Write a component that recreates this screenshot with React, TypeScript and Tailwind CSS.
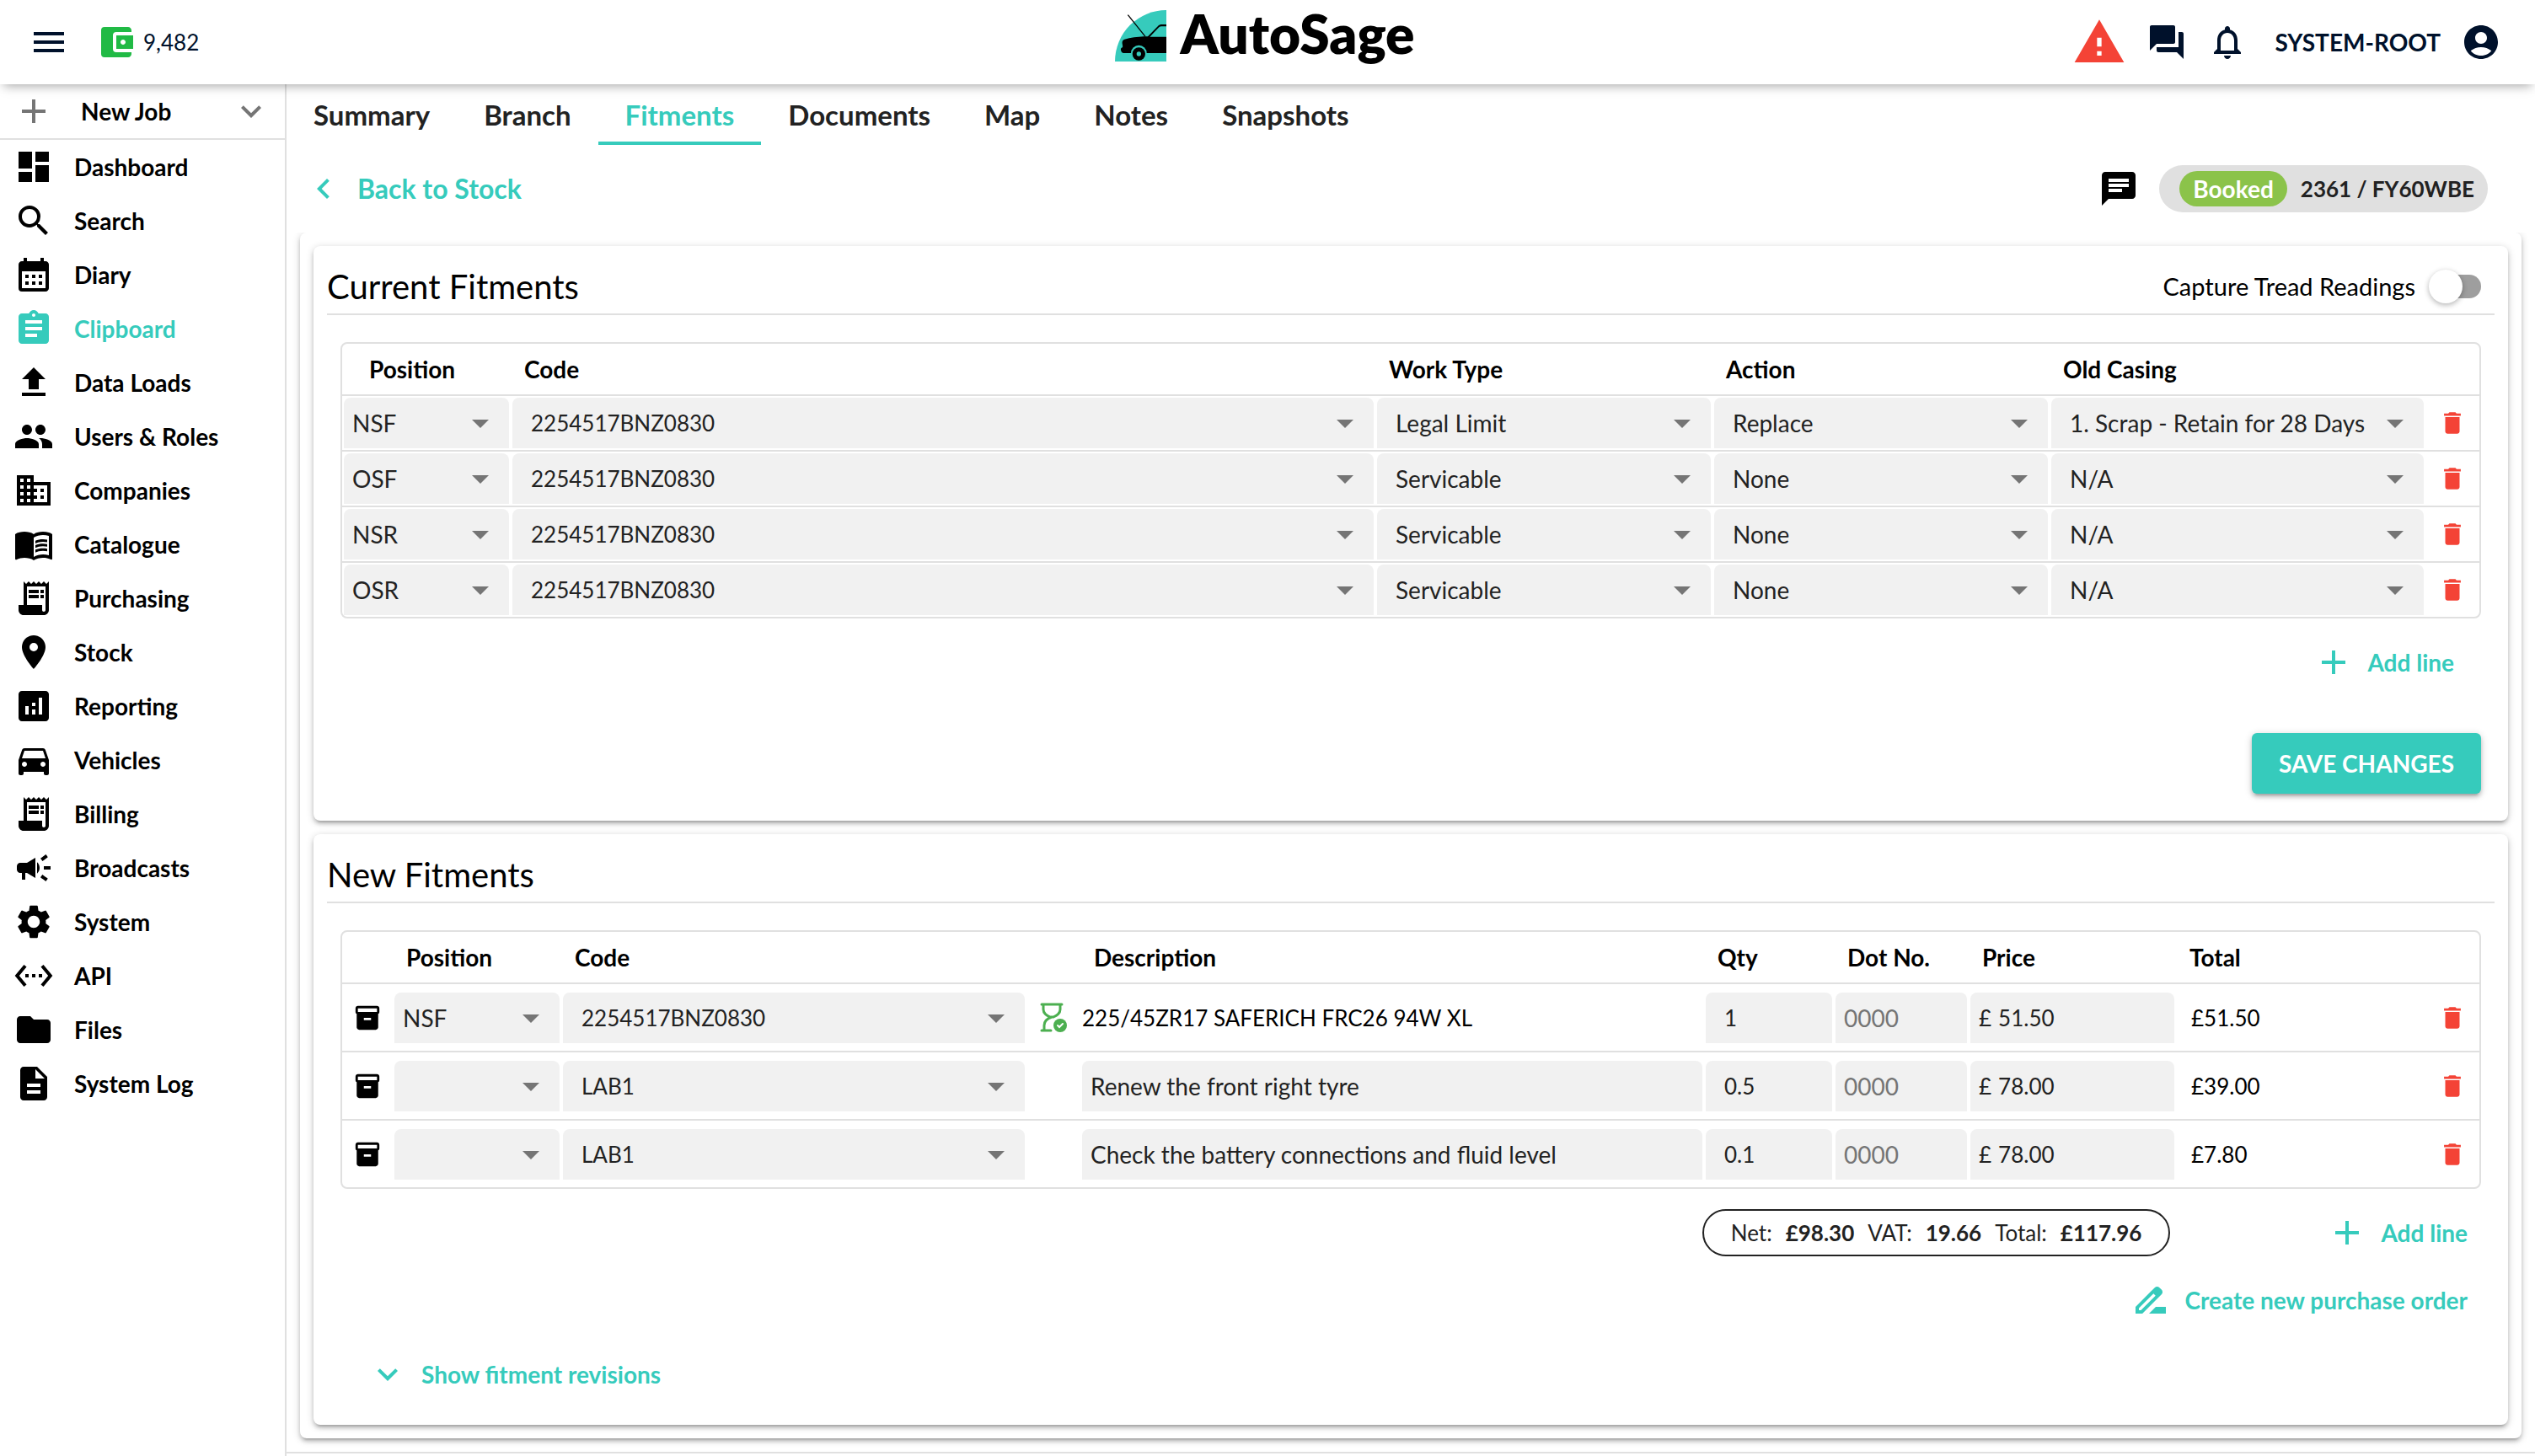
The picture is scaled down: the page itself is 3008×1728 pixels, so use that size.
import type { ReactNode } from "react";
import type { IconType } from "react-icons";
import {
    MdAccountBalanceWallet,
    MdAccountCircle,
    MdAdd,
    MdAnalytics,
    MdArrowDropDown,
    MdAssignment,
    MdBusiness,
    MdCalendarMonth,
    MdCampaign,
    MdChat,
    MdChevronLeft,
    MdDashboard,
    MdDelete,
    MdDescription,
    MdDirectionsCar,
    MdDriveFileRenameOutline,
    MdFolder,
    MdForum,
    MdInventory2,
    MdKeyboardArrowDown,
    MdMenu,
    MdMenuBook,
    MdNotificationsNone,
    MdPeople,
    MdPlace,
    MdReceiptLong,
    MdSearch,
    MdSettings,
    MdSettingsEthernet,
    MdUpload,
    MdWarning,
} from "react-icons/md";
import clsx from "clsx";

const navItems: { label: string; icon: IconType; active?: boolean }[] = [
    { label: "Dashboard", icon: MdDashboard },
    { label: "Search", icon: MdSearch },
    { label: "Diary", icon: MdCalendarMonth },
    { label: "Clipboard", icon: MdAssignment, active: true },
    { label: "Data Loads", icon: MdUpload },
    { label: "Users & Roles", icon: MdPeople },
    { label: "Companies", icon: MdBusiness },
    { label: "Catalogue", icon: MdMenuBook },
    { label: "Purchasing", icon: MdReceiptLong },
    { label: "Stock", icon: MdPlace },
    { label: "Reporting", icon: MdAnalytics },
    { label: "Vehicles", icon: MdDirectionsCar },
    { label: "Billing", icon: MdReceiptLong },
    { label: "Broadcasts", icon: MdCampaign },
    { label: "System", icon: MdSettings },
    { label: "API", icon: MdSettingsEthernet },
    { label: "Files", icon: MdFolder },
    { label: "System Log", icon: MdDescription },
];

const tabs = ["Summary", "Branch", "Fitments", "Documents", "Map", "Notes", "Snapshots"];

const currentFitments = [
    { position: "NSF", code: "2254517BNZ0830", workType: "Legal Limit", action: "Replace", casing: "1. Scrap - Retain for 28 Days" },
    { position: "OSF", code: "2254517BNZ0830", workType: "Servicable", action: "None", casing: "N/A" },
    { position: "NSR", code: "2254517BNZ0830", workType: "Servicable", action: "None", casing: "N/A" },
    { position: "OSR", code: "2254517BNZ0830", workType: "Servicable", action: "None", casing: "N/A" },
];

const newFitments = [
    { position: "NSF", code: "2254517BNZ0830", description: "225/45ZR17 SAFERICH FRC26 94W XL", fixed: true, qty: "1", price: "51.50", total: "£51.50" },
    { position: "", code: "LAB1", description: "Renew the front right tyre", fixed: false, qty: "0.5", price: "78.00", total: "£39.00" },
    { position: "", code: "LAB1", description: "Check the battery connections and fluid level", fixed: false, qty: "0.1", price: "78.00", total: "£7.80" },
];

function Logo() {
    return (
        <a href="#home" className="flex items-start gap-4 pb-4 text-black">
            <svg viewBox="0 0 183 183" className="size-[61px]" aria-hidden="true">
                <path d="M183 0v183H0A183 183 0 0 1 183 0z" fill="#36cbbc" />
                <path d="M46 17l62 77" stroke="#000" strokeWidth="4" fill="none" />
                <path d="M183 51h-16c-6 0-10 2-14 6l-36 37H102C80 95 56 98 34 104c-7 2-9 8-8 15 1 5 2 9 1 14-4 1-7 4-6 9 1 7 4 11 11 11h151V95h-59l30-31c3-4 6-6 11-6h18z" fill="#000" />
                <circle cx="85" cy="153" r="28" fill="#36cbbc" />
                <circle cx="85" cy="156" r="23" fill="#000" />
                <circle cx="85" cy="156" r="8" fill="#36cbbc" />
            </svg>
            <span className="text-[64px] leading-[56px] font-extrabold">AutoSage</span>
        </a>
    );
}

function Header() {
    return (
        <header className="relative z-10 grid h-[100px] grid-cols-[1fr_auto_1fr] items-center bg-white pr-10 pl-[34px] text-[#00112b] shadow-[0_6px_12px_-4px_rgba(0,0,0,0.35)]">
            <div className="flex items-center gap-8">
                <button aria-label="Menu">
                    <MdMenu size={48} />
                </button>
                <div className="flex items-center gap-2 text-[26px]">
                    <MdAccountBalanceWallet size={48} className="text-[#21ba45]" />
                    <span>9,482</span>
                </div>
            </div>
            <Logo />
            <div className="flex items-center justify-end gap-6">
                <button aria-label="Warnings" className="text-[#f44336]">
                    <MdWarning size={64} />
                </button>
                <button aria-label="Messages">
                    <MdForum size={48} />
                </button>
                <button aria-label="Notifications">
                    <MdNotificationsNone size={48} />
                </button>
                <button className="flex items-center gap-6 pl-2 font-bold">
                    SYSTEM-ROOT
                    <MdAccountCircle size={48} />
                </button>
            </div>
        </header>
    );
}

function Sidebar() {
    return (
        <aside className="w-[340px] shrink-0 border-r-2 border-[#e0e0e0] font-bold text-black">
            <button className="flex h-[66px] w-full items-center border-b-2 border-[#e0e0e0] px-4">
                <MdAdd size={48} className="text-[#757575]" />
                <span className="ml-8">New Job</span>
                <MdKeyboardArrowDown size={48} className="ml-auto text-[#757575]" />
            </button>
            <nav>
                {navItems.map(({ label, icon: Icon, active }) => (
                    <a key={label} href="#nav" className={clsx("flex h-16 items-center gap-6 px-4", active && "text-[#36cbbc]")}>
                        <Icon size={48} />
                        {label}
                    </a>
                ))}
            </nav>
        </aside>
    );
}

function SelectField({ label, value, variant = "wide" }: { label: string; value: string; variant?: "wide" | "narrow" | "code" }) {
    return (
        <div className="relative">
            <select
                aria-label={label}
                defaultValue={value}
                className={clsx(
                    "h-[60px] w-full appearance-none rounded-t-lg bg-[#f1f1f1] pr-14 text-[#222]",
                    variant === "narrow" ? "pl-[10px]" : "pl-[22px]",
                    variant === "code" && "text-[26px]"
                )}
            >
                <option value={value}>{value}</option>
            </select>
            <MdArrowDropDown size={48} className="pointer-events-none absolute top-[6px] right-[10px] text-[#757575]" />
        </div>
    );
}

function DeleteButton() {
    return (
        <button aria-label="Delete line" className="flex w-full justify-center text-[#f44336]">
            <MdDelete size={34} />
        </button>
    );
}

function FlatButton({ icon: Icon, children }: { icon: IconType; children: ReactNode }) {
    return (
        <button className="flex h-[72px] items-center gap-4 px-8 font-bold text-[#36cbbc]">
            <Icon size={48} />
            {children}
        </button>
    );
}

function StockReadyIcon() {
    return (
        <svg viewBox="0 0 32 36" className="mx-auto h-9 w-8" fill="none" stroke="#4caf50" strokeWidth="3" strokeLinecap="round" aria-hidden="true">
            <path d="M2 2h24M2 33h11M4 2v6c0 5 4 7 8 9h4c4-2 8-4 8-9V2M14 17c-6 2-9 6-9 10v6" />
            <circle cx="24" cy="27" r="8" fill="#4caf50" stroke="none" />
            <path d="M21 27l2 2 4-4" stroke="#fff" strokeWidth="2" />
        </svg>
    );
}

function Card({ title, action, children }: { title: string; action?: ReactNode; children: ReactNode }) {
    return (
        <section className="rounded-lg bg-white px-4 pt-4 shadow-[0_2px_10px_rgba(0,0,0,0.2),0_4px_4px_rgba(0,0,0,0.14),0_6px_2px_-4px_rgba(0,0,0,0.12)]">
            <div className="flex h-[66px] items-center justify-between border-b-2 border-[#e0e0e0] pr-4">
                <h2 className="text-[40px] leading-[56px] text-black">{title}</h2>
                {action}
            </div>
            {children}
        </section>
    );
}

function CurrentFitments() {
    return (
        <Card
            title="Current Fitments"
            action={
                <label className="flex items-center gap-4 text-[29px] text-black">
                    Capture Tread Readings
                    <input
                        type="checkbox"
                        className="relative h-7 w-[62px] appearance-none before:absolute before:inset-y-0 before:right-0 before:w-14 before:rounded-full before:bg-[#9e9e9e] after:absolute after:-top-[6px] after:left-0 after:size-10 after:rounded-full after:bg-white after:shadow-[0_2px_6px_rgba(0,0,0,0.3)]"
                    />
                </label>
            }
        >
            <div className="mx-4 mt-8 overflow-hidden rounded-lg border-2 border-[#e0e0e0]">
                <table className="w-full table-fixed border-separate border-spacing-0 text-left">
                    <colgroup>
                        <col className="w-[200px]" />
                        <col />
                        <col className="w-[400px]" />
                        <col className="w-[400px]" />
                        <col className="w-[446px]" />
                        <col className="w-16" />
                    </colgroup>
                    <thead className="text-black">
                        <tr className="h-[62px] *:border-b-2 *:border-[#e0e0e0] *:px-4 *:font-bold">
                            <th>
                                <span className="pl-4">Position</span>
                            </th>
                            <th>Code</th>
                            <th>Work Type</th>
                            <th>Action</th>
                            <th>Old Casing</th>
                            <td />
                        </tr>
                    </thead>
                    <tbody>
                        {currentFitments.map((row) => (
                            <tr key={row.position} className="*:border-b-2 *:border-[#e0e0e0] *:p-[2px] last:*:border-b-0">
                                <td>
                                    <SelectField label="Position" value={row.position} variant="narrow" />
                                </td>
                                <td>
                                    <SelectField label="Code" value={row.code} variant="code" />
                                </td>
                                <td>
                                    <SelectField label="Work Type" value={row.workType} />
                                </td>
                                <td>
                                    <SelectField label="Action" value={row.action} />
                                </td>
                                <td>
                                    <SelectField label="Old Casing" value={row.casing} />
                                </td>
                                <td>
                                    <DeleteButton />
                                </td>
                            </tr>
                        ))}
                    </tbody>
                </table>
            </div>
            <div className="mt-4 flex justify-end pr-4">
                <FlatButton icon={MdAdd}>Add line</FlatButton>
            </div>
            <div className="flex justify-end pt-12 pr-4 pb-8">
                <button className="h-[72px] rounded-md bg-[#36cbbc] px-8 font-bold text-white shadow-[0_2px_10px_rgba(0,0,0,0.2),0_4px_4px_rgba(0,0,0,0.14),0_6px_2px_-4px_rgba(0,0,0,0.12)]">
                    SAVE CHANGES
                </button>
            </div>
        </Card>
    );
}

function NewFitments() {
    return (
        <Card title="New Fitments">
            <div className="mx-4 mt-8 overflow-hidden rounded-lg border-2 border-[#e0e0e0]">
                <table className="w-full table-fixed border-separate border-spacing-0 text-left">
                    <colgroup>
                        <col className="w-[60px]" />
                        <col className="w-[200px]" />
                        <col className="w-[552px]" />
                        <col className="w-16" />
                        <col />
                        <col className="w-[154px]" />
                        <col className="w-40" />
                        <col className="w-[246px]" />
                        <col className="w-[296px]" />
                        <col className="w-16" />
                    </colgroup>
                    <thead className="text-black">
                        <tr className="h-[62px] *:border-b-2 *:border-[#e0e0e0] *:px-4 *:font-bold">
                            <td />
                            <th>Position</th>
                            <th>Code</th>
                            <td />
                            <th>Description</th>
                            <th>Qty</th>
                            <th>Dot No.</th>
                            <th>Price</th>
                            <th>Total</th>
                            <td />
                        </tr>
                    </thead>
                    <tbody>
                        {newFitments.map((row) => (
                            <tr key={row.description} className="h-[81px] *:border-b-2 *:border-[#e0e0e0] *:px-[2px] last:h-[79px] last:*:border-b-0">
                                <td>
                                    <button aria-label="Archive line" className="flex w-full justify-center text-black">
                                        <MdInventory2 size={34} />
                                    </button>
                                </td>
                                <td>
                                    <SelectField label="Position" value={row.position} variant="narrow" />
                                </td>
                                <td>
                                    <SelectField label="Code" value={row.code} variant="code" />
                                </td>
                                <td>{row.fixed && <StockReadyIcon />}</td>
                                <td className="text-black">
                                    {row.fixed ? (
                                        <span className="text-[26px]">{row.description}</span>
                                    ) : (
                                        <input aria-label="Description" defaultValue={row.description} className="h-[60px] w-full rounded-t-lg bg-[#f1f1f1] px-[10px] text-[#222]" />
                                    )}
                                </td>
                                <td className="text-[26px]">
                                    <input aria-label="Qty" defaultValue={row.qty} className="h-[60px] w-full rounded-t-lg bg-[#f1f1f1] px-[22px]" />
                                </td>
                                <td>
                                    <input aria-label="Dot No." placeholder="0000" className="h-[60px] w-full rounded-t-lg bg-[#f1f1f1] px-[10px] placeholder:text-[#757575]" />
                                </td>
                                <td className="text-[26px]">
                                    <label className="flex h-[60px] items-center gap-2 rounded-t-lg bg-[#f1f1f1] px-[10px]">
                                        £
                                        <input aria-label="Price" defaultValue={row.price} className="w-full min-w-0 bg-transparent" />
                                    </label>
                                </td>
                                <td className="text-[26px] text-black">
                                    <span className="pl-4">{row.total}</span>
                                </td>
                                <td>
                                    <DeleteButton />
                                </td>
                            </tr>
                        ))}
                    </tbody>
                </table>
            </div>
            <div className="mt-4 flex items-center justify-end">
                <div className="mr-[154px] flex h-14 items-center gap-4 rounded-full border-2 border-[#222] px-8 text-[26px]">
                    <span>Net:</span>
                    <b>£98.30</b>
                    <span>VAT:</span>
                    <b>19.66</b>
                    <span>Total:</span>
                    <b>£117.96</b>
                </div>
                <FlatButton icon={MdAdd}>Add line</FlatButton>
            </div>
            <div className="mt-2 flex justify-end">
                <FlatButton icon={MdDriveFileRenameOutline}>Create new purchase order</FlatButton>
            </div>
            <div className="mt-4 flex pb-6 pl-4">
                <FlatButton icon={MdKeyboardArrowDown}>Show fitment revisions</FlatButton>
            </div>
        </Card>
    );
}

export default function App() {
    return (
        <div className="flex min-h-screen flex-col bg-white font-['Lato',sans-serif] text-[28px] leading-10 text-[#222]">
            <Header />
            <div className="flex flex-1">
                <Sidebar />
                <main className="min-w-0 flex-1">
                    <nav className="flex text-[33px] font-bold">
                        {tabs.map((tab) => (
                            <a
                                key={tab}
                                href="#tab"
                                className={clsx(
                                    "flex h-[72px] items-center border-y-4 border-transparent px-8",
                                    tab === "Fitments" && "border-b-[#36cbbc] text-[#36cbbc]"
                                )}
                            >
                                {tab}
                            </a>
                        ))}
                    </nav>
                    <div className="relative flex h-[104px] items-center justify-between bg-white pr-14 pl-5">
                        <a href="#stock" className="flex items-center gap-4 text-[32px] font-bold text-[#36cbbc]">
                            <MdChevronLeft size={48} />
                            Back to Stock
                        </a>
                        <div className="flex items-center gap-6">
                            <button aria-label="Comments" className="text-black">
                                <MdChat size={48} />
                            </button>
                            <div className="flex h-14 items-center gap-4 rounded-full bg-[#e0e0e0] pr-4 pl-6 text-[26px] font-bold">
                                <span className="flex h-[42px] items-center rounded-full bg-[#8bc34a] px-4 text-[28px] text-white">Booked</span>
                                2361 / FY60WBE
                            </div>
                        </div>
                    </div>
                    <div className="mx-4 mb-4 space-y-4 rounded-lg p-4 shadow-[0_2px_10px_rgba(0,0,0,0.2),0_4px_4px_rgba(0,0,0,0.14),0_6px_2px_-4px_rgba(0,0,0,0.12)]">
                        <CurrentFitments />
                        <NewFitments />
                    </div>
                    <footer className="border-t-2 border-[#e0e0e0]" />
                </main>
            </div>
        </div>
    );
}
